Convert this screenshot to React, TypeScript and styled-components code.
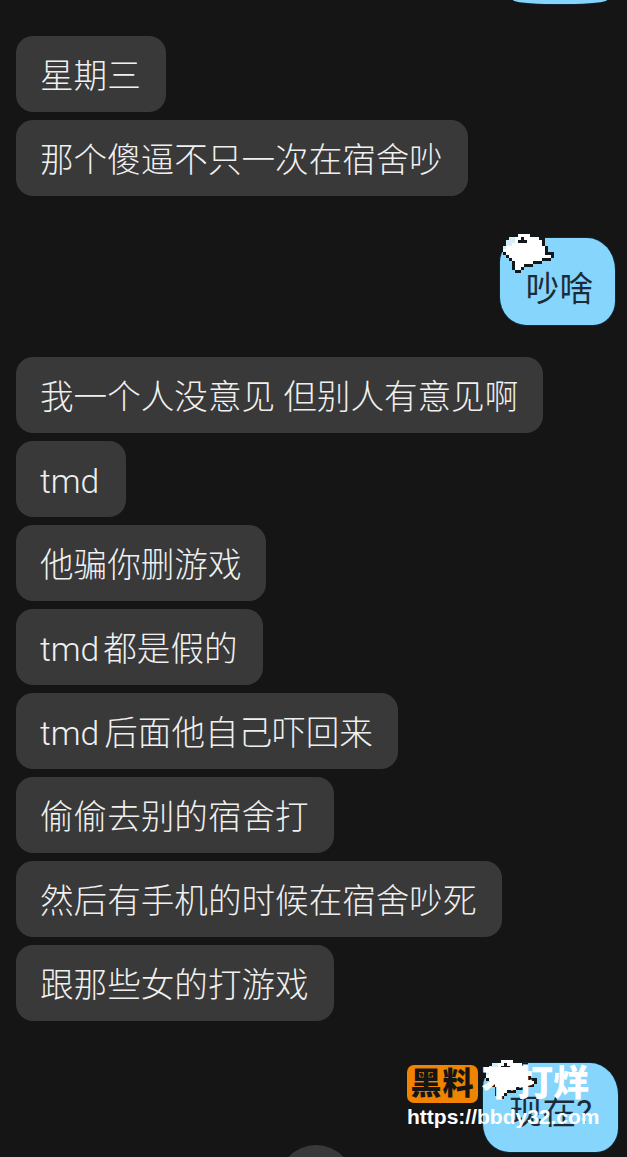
import type { ReactNode } from "react";
import styled, { createGlobalStyle } from "styled-components";

const GlobalStyle = createGlobalStyle`
  html, body {
    margin: 0;
    padding: 0;
    background: #151515;
  }
  body {
    font-family: Roboto, "Noto Sans CJK SC", "Noto Sans", sans-serif;
  }
`;

const Page = styled.div`
  position: relative;
  width: 627px;
  height: 1157px;
  overflow: hidden;
  background: #151515;
`;

const Thread = styled.div`
  display: flex;
  flex-direction: column;
  padding: 0 0 0 16px;
`;

const Group = styled.div<{ $top: number }>`
  display: flex;
  flex-direction: column;
  align-items: flex-start;
  gap: 8px;
  margin-top: ${(p) => p.$top}px;
`;

const Bubble = styled.div`
  height: 76px;
  box-sizing: border-box;
  padding: 6px 25px 0 24px;
  display: flex;
  align-items: center;
  background: #393939;
  border-radius: 17px;
  color: #f0f0f0;
  font-size: 33.6px;
  font-weight: 300;
  line-height: 1;
  white-space: nowrap;
`;

const Latin = styled.span<{ $gap: number }>`
  margin-right: ${(p) => p.$gap}px;
`;

const OwnRow = styled.div<{ $top: number; $right: number }>`
  display: flex;
  justify-content: flex-end;
  margin-top: ${(p) => p.$top}px;
  margin-right: ${(p) => p.$right}px;
`;

const OwnBubble = styled.div<{ $padTop: number; $padBottom: number; $padRight: number }>`
  position: relative;
  padding: ${(p) => p.$padTop}px ${(p) => p.$padRight}px ${(p) => p.$padBottom}px 26px;
  background: #86d5fc;
  border-radius: 26px 28px 22px 26px / 24px 32px 24px 28px;
  box-shadow: 0 0 0 1px #0d2735;
  color: #1c2b3a;
  font-size: 33.6px;
  line-height: 43px;
  white-space: nowrap;
`;

const Sliver = styled.div`
  width: 94px;
  height: 4px;
  margin: 0 20px 0 auto;
  background: #86d5fc;
  border-radius: 0 0 40px 40px / 0 0 4px 4px;
  box-shadow: 0 0 0 1px #0d2735;
`;

const StickerSvg = styled.svg<{ $left: number; $top: number }>`
  position: absolute;
  left: ${(p) => p.$left}px;
  top: ${(p) => p.$top}px;
`;

const ScrollButton = styled.div`
  position: absolute;
  left: 278px;
  top: 1145px;
  width: 76px;
  height: 76px;
  border-radius: 50%;
  background: #393939;
`;

const Watermark = styled.div`
  position: absolute;
  left: 407px;
  top: 1065px;
  display: flex;
  flex-direction: column;
  gap: 1px;
`;

const BrandRow = styled.div`
  display: flex;
  align-items: center;
  gap: 3px;
`;

const BrandBadge = styled.div`
  width: 71px;
  height: 38px;
  border-radius: 7px;
  background: #f08300;
  color: #151515;
  font-size: 31px;
  font-weight: 900;
  line-height: 38px;
  text-align: center;
  letter-spacing: 1px;
`;

const BrandName = styled.div`
  color: #ffffff;
  font-size: 36px;
  font-weight: 900;
  line-height: 38px;
  white-space: nowrap;
`;

const BrandUrl = styled.div`
  color: #ffffff;
  font-family: "Liberation Sans", Arial, sans-serif;
  font-size: 21px;
  font-weight: 700;
  line-height: 26px;
  white-space: nowrap;
`;

const stickerRows = [
  "......KKKK........",
  "...KKKWWWWKKK.....",
  "..KBBWWKWWWWWKK...",
  ".KBBBWKKKWWWWWK...",
  ".KBBWWWWWWWWWWK...",
  "KBWWWWWWWWWWWWWK..",
  "KWWWWWWWWWWWWWWK..",
  ".KWWWWWWWWWWWWWKKK",
  "..KWWWWWWWWWWWWWWK",
  "...KWWWWWWWWWWKKK.",
  "....KWWWWWWKKK....",
  "....KWWWKKK.......",
  "....KWWK..........",
  ".....KK...........",
];

const stickerColors: Record<string, string> = {
  K: "#10181c",
  W: "#ffffff",
  B: "#d5eef8",
};

const Sticker = ({ left, top }: { left: number; top: number }) => (
  <StickerSvg $left={left} $top={top} width={54} height={42} viewBox="0 0 54 42" shapeRendering="crispEdges">
    {stickerRows.map((row, y) =>
      row.split("").map((cell, x) =>
        cell === "." ? null : (
          <rect key={`${x}-${y}`} x={x * 3} y={y * 3} width={3} height={3} fill={stickerColors[cell]} />
        )
      )
    )}
  </StickerSvg>
);

const firstMessages: ReactNode[] = ["星期三", "那个傻逼不只一次在宿舍吵"];

const secondMessages: ReactNode[] = [
  "我一个人没意见 但别人有意见啊",
  <Latin $gap={2}>tmd</Latin>,
  "他骗你删游戏",
  <><Latin $gap={4}>tmd</Latin>都是假的</>,
  <><Latin $gap={5}>tmd</Latin>后面他自己吓回来</>,
  "偷偷去别的宿舍打",
  "然后有手机的时候在宿舍吵死",
  "跟那些女的打游戏",
];

export default function App() {
  return (
    <Page>
      <GlobalStyle />
      <Sliver />
      <Thread>
        <Group $top={32}>
          {firstMessages.map((text, i) => (
            <Bubble key={i}>{text}</Bubble>
          ))}
        </Group>
        <OwnRow $top={42} $right={12}>
          <OwnBubble $padTop={30} $padBottom={14} $padRight={22}>
            吵啥
            <Sticker left={0} top={-7} />
          </OwnBubble>
        </OwnRow>
        <Group $top={32}>
          {secondMessages.map((text, i) => (
            <Bubble key={i}>{text}</Bubble>
          ))}
        </Group>
        <OwnRow $top={42} $right={9}>
          <OwnBubble $padTop={28} $padBottom={18} $padRight={26}>
            现在?
            <Sticker left={0} top={-6} />
          </OwnBubble>
        </OwnRow>
      </Thread>
      <ScrollButton />
      <Watermark>
        <BrandRow>
          <BrandBadge>黑料</BrandBadge>
          <BrandName>不打烊</BrandName>
        </BrandRow>
        <BrandUrl>https://bbdy32.com</BrandUrl>
      </Watermark>
    </Page>
  );
}
